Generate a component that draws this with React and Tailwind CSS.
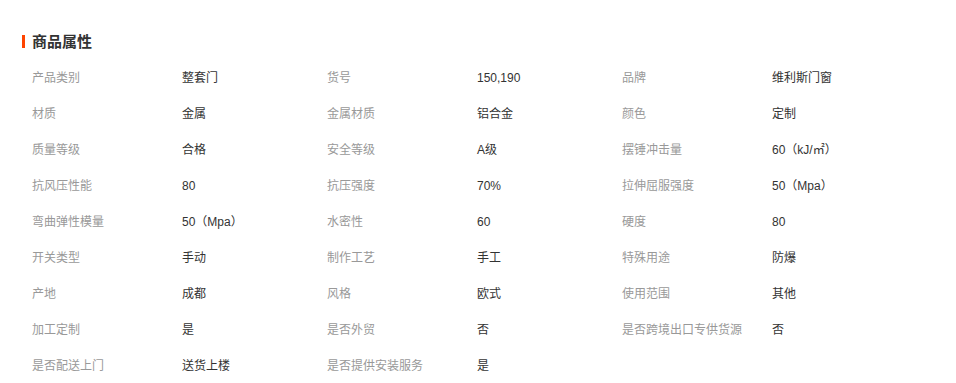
const attrs = [
  ["产品类别", "整套门", "货号", "150,190", "品牌", "维利斯门窗"],
  ["材质", "金属", "金属材质", "铝合金", "颜色", "定制"],
  ["质量等级", "合格", "安全等级", "A级", "摆锤冲击量", "60（kJ/㎡）"],
  ["抗风压性能", "80", "抗压强度", "70%", "拉伸屈服强度", "50（Mpa）"],
  ["弯曲弹性模量", "50（Mpa）", "水密性", "60", "硬度", "80"],
  ["开关类型", "手动", "制作工艺", "手工", "特殊用途", "防爆"],
  ["产地", "成都", "风格", "欧式", "使用范围", "其他"],
  ["加工定制", "是", "是否外贸", "否", "是否跨境出口专供货源", "否"],
  ["是否配送上门", "送货上楼", "是否提供安装服务", "是"],
];

function Cell({ label, value }) {
  return (
    <div className="flex items-center h-9">
      <div className="w-[150px] text-[#999]">{label}</div>
      <div className="text-[#333]">{value}</div>
    </div>
  );
}

export default function App() {
  return (
    <div className="w-[956px] h-[383px] bg-white overflow-hidden text-xs font-['Liberation_Sans','Noto_Sans_CJK_SC',sans-serif]">
      <div className="flex items-center pt-[34px] pl-[22px]">
        <div className="w-[3px] h-[13px] bg-[#ff4400]" />
        <div className="ml-[7px] text-[15px] leading-[15px] font-bold text-[#333]">商品属性</div>
      </div>
      <div className="pt-[11px] pl-8">
        {attrs.map((row, i) => (
          <div key={i} className="grid grid-cols-[295px_295px_295px]">
            <Cell label={row[0]} value={row[1]} />
            <Cell label={row[2]} value={row[3]} />
            {row[4] && <Cell label={row[4]} value={row[5]} />}
          </div>
        ))}
      </div>
    </div>
  );
}
